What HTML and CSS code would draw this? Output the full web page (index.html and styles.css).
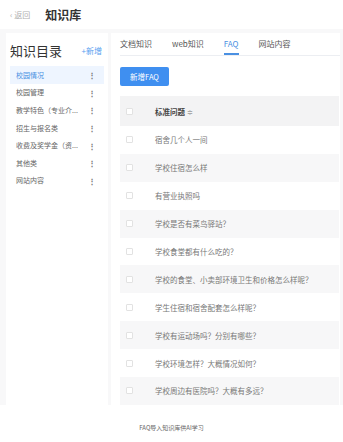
FILE: index.html
```html
<!DOCTYPE html>
<html lang="zh">
<head>
<meta charset="utf-8">
<link rel="stylesheet" href="styles.css">
</head>
<body>
<div class="page">
  <header class="topbar">
    <span class="back">‹ 返回</span>
    <span class="title">知识库</span>
  </header>
  <div class="main">
    <aside class="side">
      <div class="side-head">
        <span class="side-title">知识目录</span>
        <span class="side-add">+新增</span>
      </div>
      <ul class="cat-list">
        <li class="cat active"><span>校园情况</span><span class="more">⋮</span></li>
        <li class="cat"><span>校园管理</span><span class="more">⋮</span></li>
        <li class="cat"><span>教学特色（专业介...</span><span class="more">⋮</span></li>
        <li class="cat"><span>招生与报名类</span><span class="more">⋮</span></li>
        <li class="cat"><span>收费及奖学金（资...</span><span class="more">⋮</span></li>
        <li class="cat"><span>其他类</span><span class="more">⋮</span></li>
        <li class="cat"><span>网站内容</span><span class="more">⋮</span></li>
      </ul>
    </aside>
    <section class="content">
      <nav class="tabs">
        <span class="tab">文档知识</span>
        <span class="tab">web知识</span>
        <span class="tab active">FAQ</span>
        <span class="tab">网站内容</span>
      </nav>
      <button class="add-btn">新增FAQ</button>
      <div class="table">
        <div class="row head"><span class="cb"></span><span class="q">标准问题 <span class="sort">≑</span></span></div>
        <div class="row"><span class="cb"></span><span class="q">宿舍几个人一间</span></div>
        <div class="row alt"><span class="cb"></span><span class="q">学校住宿怎么样</span></div>
        <div class="row"><span class="cb"></span><span class="q">有营业执照吗</span></div>
        <div class="row alt"><span class="cb"></span><span class="q">学校是否有菜鸟驿站？</span></div>
        <div class="row"><span class="cb"></span><span class="q">学校食堂都有什么吃的？</span></div>
        <div class="row alt"><span class="cb"></span><span class="q">学校的食堂、小卖部环境卫生和价格怎么样呢？</span></div>
        <div class="row"><span class="cb"></span><span class="q">学生住宿和宿舍配套怎么样呢？</span></div>
        <div class="row alt"><span class="cb"></span><span class="q">学校有运动场吗？分别有哪些？</span></div>
        <div class="row"><span class="cb"></span><span class="q">学校环境怎样？大概情况如何？</span></div>
        <div class="row alt"><span class="cb"></span><span class="q">学校周边有医院吗？大概有多远？</span></div>
      </div>
    </section>
  </div>
  <p class="caption">FAQ导入知识库供AI学习</p>
</div>
</body>
</html>
```

FILE: styles.css
```css
* { box-sizing: border-box; }
html, body { margin: 0; padding: 0; background: #ffffff; }
body {
  font-family: "Noto Sans CJK SC", "Noto Sans", sans-serif;
  color: #555;
  width: 343px;
  height: 442px;
  overflow: hidden;
}
.page { display: flex; flex-direction: column; }
.topbar {
  height: 29px;
  display: flex;
  align-items: center;
  padding-left: 10px;
  background: #fff;
}
.back { font-size: 8px; color: #b0b0b0; }
.title { font-size: 12px; font-weight: 700; color: #333; margin-left: 15px; }
.main {
  display: flex;
  background: #f8f8f9;
  padding: 4px 3px 0 6px;
  gap: 3px;
  height: 376px;
}
.side {
  width: 102px;
  background: #fff;
  padding: 9px 4px 0 4px;
}
.side-head {
  display: flex;
  justify-content: space-between;
  align-items: center;
  height: 17px;
  margin-bottom: 7px;
}
.side-title { font-size: 13px; color: #333; }
.side-add { font-size: 8px; color: #5aa0f0; margin-right: 2px; }
.cat-list { list-style: none; margin: 0; padding: 0; }
.cat {
  display: flex;
  justify-content: space-between;
  align-items: center;
  height: 17.6px;
  padding: 0 8px 0 6px;
  font-size: 7px;
  color: #666;
}
.cat.active { background: #eef5ff; color: #4a90e2; }
.more { font-size: 8px; color: #777; font-weight: 700; }
.content {
  flex: 1;
  background: #fff;
  padding: 0 0 0 9px;
  display: flex;
  flex-direction: column;
  align-items: flex-start;
}
.tabs {
  display: flex;
  gap: 20px;
  height: 23px;
  align-items: flex-end;
  width: 100%;
  border-bottom: 1px solid #eceef2;
}
.tab {
  font-size: 8px;
  color: #555;
  padding-bottom: 5px;
  line-height: 12px;
}
.tab.active { color: #4a90e2; border-bottom: 2px solid #4a90e2; padding-bottom: 3px; }
.add-btn {
  margin-top: 11px;
  width: 49px;
  height: 19px;
  border: none;
  border-radius: 2px;
  background: #3f8ff0;
  color: #fff;
  font-family: inherit;
  font-size: 7.5px;
  padding: 0;
}
.table { margin-top: 10px; width: 219px; }
.row {
  display: flex;
  align-items: center;
  height: 27.9px;
  font-size: 7.5px;
  color: #777;
}
.row.head { height: 30px; background: #f3f3f4; color: #444; font-weight: 700; }
.row.alt { background: #f7f7f8; }
.cb {
  width: 7px;
  height: 7px;
  border: 1px solid #e2e2e2;
  background: #fff;
  border-radius: 1px;
  margin-left: 6px;
  margin-right: 22px;
  flex: none;
}
.sort { font-weight: 400; color: #aaa; font-size: 7px; }
.caption {
  margin: 18px 0 0 0;
  text-align: center;
  font-size: 6px;
  color: #666;
}
```
